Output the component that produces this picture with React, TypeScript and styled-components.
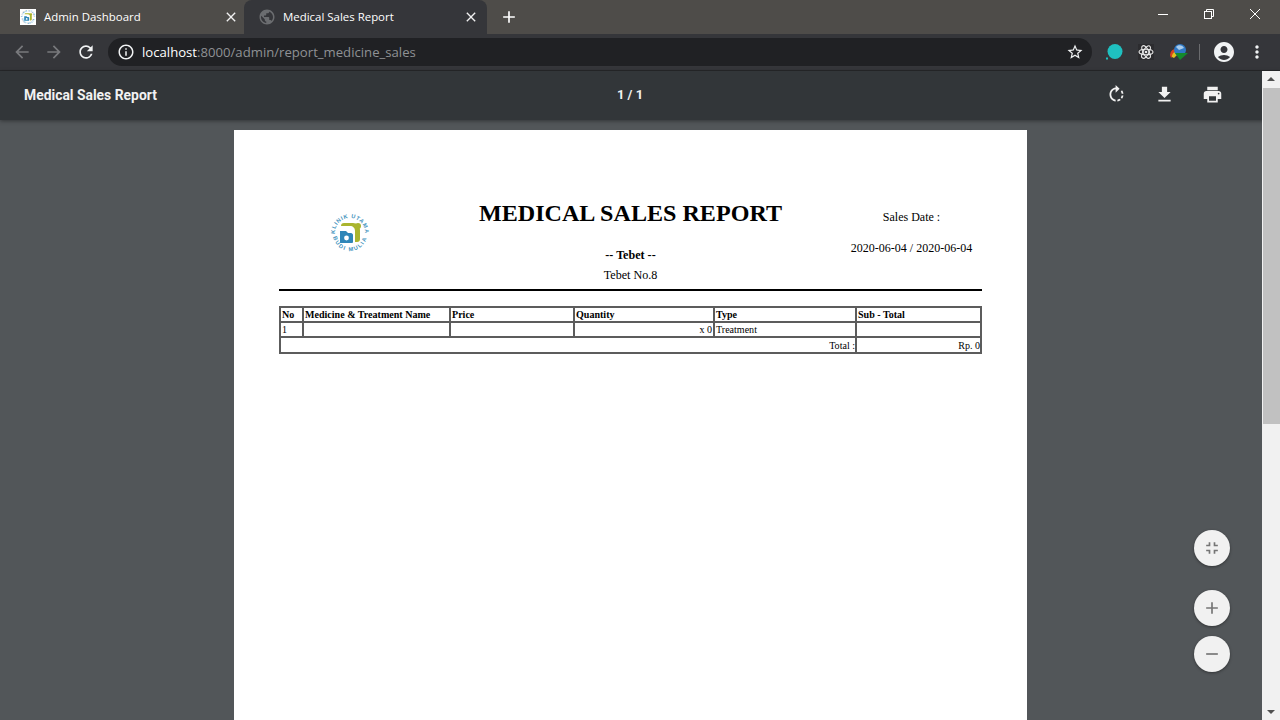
import React from 'react';
import styled, { createGlobalStyle } from 'styled-components';
import {
  MdAccountCircle,
  MdAdd,
  MdArrowBack,
  MdArrowForward,
  MdClose,
  MdFileDownload,
  MdFullscreenExit,
  MdInfoOutline,
  MdMoreVert,
  MdPrint,
  MdPublic,
  MdRefresh,
  MdRemove,
  MdRotateRight,
  MdStarBorder,
} from 'react-icons/md';

const GlobalStyle = createGlobalStyle`
  html, body {
    margin: 0;
    height: 100%;
    overflow: hidden;
    background: #525659;
  }
`;

const Browser = styled.div`
  width: 1280px;
  height: 720px;
  display: flex;
  flex-direction: column;
  overflow: hidden;
  font-family: "Open Sans", "Liberation Sans", sans-serif;
`;

const TabStrip = styled.div`
  height: 34px;
  flex: none;
  display: flex;
  align-items: stretch;
  background: #4e4c49;
  padding-left: 8px;
`;

const Tab = styled.div<{ $active?: boolean }>`
  position: relative;
  width: ${p => (p.$active ? 243 : 236)}px;
  box-sizing: border-box;
  display: flex;
  align-items: center;
  padding: 0 ${p => (p.$active ? 8 : 5)}px 0 ${p => (p.$active ? 15 : 12)}px;
  background: ${p => (p.$active ? '#35363a' : 'transparent')};
  border-radius: ${p => (p.$active ? '8px 8px 0 0' : '0')};
  color: #fff;
`;

const Favicon = styled.span`
  width: 16px;
  height: 16px;
  flex: none;
  display: flex;
  background: #fff;
`;

const GlobeIcon = styled(MdPublic)`
  width: 18px;
  height: 18px;
  margin: 0 -1px;
  flex: none;
  color: #6b6d70;
`;

const TabTitle = styled.span`
  flex: 1;
  margin-left: 8px;
  font-size: 11.45px;
  line-height: 16px;
  white-space: nowrap;
`;

const TabClose = styled(MdClose)`
  width: 16px;
  height: 16px;
  flex: none;
  color: #f1f1f1;
`;

const NewTab = styled(MdAdd)`
  width: 20px;
  height: 20px;
  align-self: center;
  margin-left: 12px;
  color: #fff;
`;

const WindowButtons = styled.div`
  margin-left: auto;
  margin-right: 2px;
  display: flex;
`;

const WindowButton = styled.span`
  width: 46px;
  height: 28px;
  display: flex;
  align-items: center;
  justify-content: center;
  color: #fff;
`;

const Toolbar = styled.div`
  height: 36px;
  flex: none;
  display: flex;
  align-items: center;
  background: #35363a;
  border-bottom: 1px solid #27282b;
  padding-left: 6px;
`;

const NavButton = styled.span<{ $dim?: boolean }>`
  width: 32px;
  height: 32px;
  display: flex;
  align-items: center;
  justify-content: center;
  font-size: 20px;
  color: ${p => (p.$dim ? '#78797c' : '#f1f3f4')};
`;

const AddressBar = styled.div`
  width: 984px;
  height: 28px;
  margin-left: 6px;
  box-sizing: border-box;
  display: flex;
  align-items: center;
  padding: 0 8px 0 9px;
  border-radius: 14px;
  background: #202124;
  color: #f1f3f4;
  font-size: 18px;
`;

const Url = styled.span`
  flex: 1;
  margin-left: 7px;
  font-size: 13.15px;
  color: #8f9194;
  white-space: nowrap;
`;

const UrlHost = styled.span`
  color: #fff;
`;

const Extensions = styled.div`
  display: flex;
  align-items: center;
  margin-left: 6px;
`;

const ExtensionSlot = styled.span<{ $shift?: number }>`
  width: 32px;
  height: 32px;
  margin-left: ${p => p.$shift ?? 0}px;
  display: flex;
  align-items: center;
  justify-content: center;
`;

const Separator = styled.span`
  width: 1px;
  height: 16px;
  margin: 0 6px 0 4px;
  background: #6a6b6e;
`;

const ProfileButton = styled(NavButton)`
  font-size: 24px;
  width: 34px;
  margin-left: 1px;
`;

const MenuButton = styled(NavButton)`
  margin-left: 0;
`;

const ViewerBar = styled.div`
  height: 49px;
  flex: none;
  box-sizing: border-box;
  display: grid;
  grid-template-columns: 1fr auto 1fr;
  align-items: center;
  padding: 0 24px 2px;
  background: #323639;
  color: #f1f1f1;
  font-family: Roboto, "Liberation Sans", sans-serif;
  font-size: 13.9px;
  font-weight: 700;
  box-shadow: 0 1px 4px rgba(0, 0, 0, 0.4);
  position: relative;
  z-index: 2;
`;

const PageCount = styled.span`
  margin-left: -20px;
  font-size: 13px;
`;

const ViewerActions = styled.div`
  justify-self: end;
  display: flex;
  gap: 27px;
  margin-right: 33px;
  font-size: 21px;
  line-height: 0;
`;

const Main = styled.div`
  flex: 1;
  min-height: 0;
  position: relative;
  display: flex;
  background: #525659;
`;

const PageArea = styled.div`
  flex: 1;
  min-width: 0;
  padding: 10px 0 0 234px;
  overflow: hidden;
`;

const Sheet = styled.div`
  width: 793px;
  height: 900px;
  box-sizing: border-box;
  padding: 70px 45px 0;
  background: #fff;
  color: #000;
  font-family: "Liberation Serif", "Times New Roman", serif;
`;

const ReportHeader = styled.div`
  display: grid;
  grid-template-columns: 141px 1fr 141px;
  height: 89px;
  border-bottom: 2px solid #000;
`;

const LogoCell = styled.div`
  display: flex;
  justify-content: center;
  padding-top: 12px;
`;

const TitleCell = styled.div`
  text-align: center;
`;

const ReportTitle = styled.h1`
  margin: 0;
  font-size: 24.1px;
  line-height: 26px;
  font-weight: 700;
`;

const Branch = styled.div`
  margin-top: 21px;
  font-size: 12.1px;
  line-height: 16px;
  font-weight: 700;
`;

const BranchAddress = styled.div`
  margin-top: 4px;
  font-size: 12.1px;
  line-height: 16px;
`;

const DateCell = styled.div`
  text-align: center;
  font-size: 12px;
  line-height: 16px;
  padding-top: 9px;
`;

const DateRange = styled.div`
  margin-top: 15px;
`;

const SalesTable = styled.table`
  width: 702px;
  margin: 15px 0 0 0;
  table-layout: fixed;
  border-collapse: collapse;
  font-size: 10.05px;
  line-height: 11px;
`;

const Th = styled.th`
  height: 15px;
  padding: 0 1px 0;
  box-sizing: border-box;
  border: 2px solid #5c5c5c;
  text-align: left;
  font-weight: 700;
  vertical-align: middle;
`;

const Td = styled.td<{ $right?: boolean; $tall?: boolean }>`
  height: ${p => (p.$tall ? 16 : 15)}px;
  padding: 0 ${p => (p.$tall ? 0 : 1)}px 0 1px;
  box-sizing: border-box;
  border: 2px solid #5c5c5c;
  text-align: ${p => (p.$right ? 'right' : 'left')};
  vertical-align: middle;
`;

const Scrollbar = styled.div`
  width: 18px;
  flex: none;
  margin-top: -49px;
  position: relative;
  z-index: 3;
  display: flex;
  flex-direction: column;
  align-items: center;
  background: #f1f1f1;
`;

const ScrollArrow = styled.span<{ $down?: boolean }>`
  width: 0;
  height: 0;
  margin: ${p => (p.$down ? 'auto 0 6px' : '6px 0 0')};
  border-left: 4px solid transparent;
  border-right: 4px solid transparent;
  border-${p => (p.$down ? 'top' : 'bottom')}: 4px solid #505050;
`;

const ScrollThumb = styled.div`
  width: 17px;
  height: 336px;
  margin-top: 7px;
  background: #c1c1c1;
`;

const ZoomControls = styled.div`
  position: absolute;
  right: 50px;
  bottom: 48px;
  display: flex;
  flex-direction: column;
  gap: 10px;
`;

const ZoomButton = styled.span<{ $gap?: number }>`
  width: 36px;
  height: 36px;
  margin-bottom: ${p => p.$gap ?? 0}px;
  border-radius: 50%;
  display: flex;
  align-items: center;
  justify-content: center;
  background: #f1f1f1;
  color: #757575;
  font-size: 20px;
  box-shadow: 0 1px 3px rgba(0, 0, 0, 0.4);
`;

const ExtensionTile = styled.span`
  width: 16px;
  height: 16px;
  display: flex;
  background: #2c2c2f;
`;

const ClinicLogo = ({ size, id }: { size: number; id: string }) => (
  <svg width={size} height={size} viewBox="0 0 42 42">
    <defs>
      <path id={`${id}-top`} d="M6 21a15 15 0 0 1 30 0" />
      <path id={`${id}-bottom`} d="M4 22a17 17 0 0 0 34 0" />
    </defs>
    <text fontFamily="Liberation Sans" fontSize="5.6" fontWeight="700" letterSpacing="0.7" fill="#3f93bd" textAnchor="middle">
      <textPath href={`#${id}-top`} startOffset="50%">KLINIK UTAMA</textPath>
    </text>
    <text fontFamily="Liberation Sans" fontSize="5.6" fontWeight="700" letterSpacing="1.4" fill="#3f93bd" textAnchor="middle">
      <textPath href={`#${id}-bottom`} startOffset="50%">BUDI MULIA</textPath>
    </text>
    <path
      d="M12 14c0-2 1-3 3-3h9c4 0 7 3 7 7v9c0 2-1 3-3 3h-2v-11c0-3-2-5-5-5H12z"
      fill="#aab52e"
    />
    <circle cx="29" cy="14" r="3" fill="#aab52e" />
    <path d="M11 19h6l2 2h3c1 0 2 1 2 2v7c0 1-1 1-2 1H12c-1 0-1 0-1-1z" fill="#2e86b8" />
    <circle cx="17.5" cy="26" r="2.4" fill="#fff" />
  </svg>
);

const IdmIcon = () => (
  <svg width="20" height="18" viewBox="0 0 20 18">
    <path d="M1 12a6 6 0 0 1 7-6l-1 3a3 3 0 0 0-3 4l-2 2z" fill="#d8431f" />
    <path d="M3 14a5 5 0 0 1 3-5l2 3-3 3z" fill="#e4c21e" />
    <circle cx="11" cy="7" r="6" fill="#2f78c4" />
    <path d="M7 4c2-3 7-2 8 1l-5 2z" fill="#a8cbea" />
    <path d="M6 10h13l-8 7z" fill="#148a2c" />
  </svg>
);

const AtomIcon = () => (
  <ExtensionTile>
    <svg width="16" height="16" viewBox="0 0 16 16" fill="none" stroke="#e8e8e8" strokeWidth="1.1">
      <ellipse cx="8" cy="8" rx="7" ry="2.8" />
      <ellipse cx="8" cy="8" rx="7" ry="2.8" transform="rotate(60 8 8)" />
      <ellipse cx="8" cy="8" rx="7" ry="2.8" transform="rotate(120 8 8)" />
      <circle cx="8" cy="8" r="1.3" fill="#e8e8e8" stroke="none" />
    </svg>
  </ExtensionTile>
);

const TealIcon = () => (
  <svg width="18" height="18" viewBox="0 0 18 18">
    <circle cx="10" cy="8.5" r="7.5" fill="#1fc0c0" />
    <rect x="1" y="14.5" width="2" height="2" fill="#1fc0c0" />
  </svg>
);

const columns = [23, 147, 124, 140, 142, 125];
const headings = ['No', 'Medicine & Treatment Name', 'Price', 'Quantity', 'Type', 'Sub - Total'];

export default function App() {
  return (
    <Browser>
      <GlobalStyle />
      <TabStrip>
        <Tab>
          <Favicon>
            <ClinicLogo size={16} id="favicon" />
          </Favicon>
          <TabTitle>Admin Dashboard</TabTitle>
          <TabClose />
        </Tab>
        <Tab $active>
          <GlobeIcon />
          <TabTitle>Medical Sales Report</TabTitle>
          <TabClose />
        </Tab>
        <NewTab />
        <WindowButtons>
          <WindowButton>
            <svg width="10" height="10" viewBox="0 0 10 10" stroke="currentColor" fill="none">
              <path d="M0 5.5h10" />
            </svg>
          </WindowButton>
          <WindowButton>
            <svg width="10" height="10" viewBox="0 0 10 10" stroke="currentColor" fill="none">
              <rect x="0.5" y="2.5" width="7" height="7" />
              <path d="M2.5 2.5v-2h7v7h-2" />
            </svg>
          </WindowButton>
          <WindowButton>
            <svg width="10" height="10" viewBox="0 0 10 10" stroke="currentColor" fill="none">
              <path d="M0 0l10 10M10 0L0 10" />
            </svg>
          </WindowButton>
        </WindowButtons>
      </TabStrip>
      <Toolbar>
        <NavButton $dim><MdArrowBack /></NavButton>
        <NavButton $dim><MdArrowForward /></NavButton>
        <NavButton><MdRefresh /></NavButton>
        <AddressBar>
          <MdInfoOutline />
          <Url>
            <UrlHost>localhost</UrlHost>:8000/admin/report_medicine_sales
          </Url>
          <MdStarBorder />
        </AddressBar>
        <Extensions>
          <ExtensionSlot><TealIcon /></ExtensionSlot>
          <ExtensionSlot><AtomIcon /></ExtensionSlot>
          <ExtensionSlot $shift={1}><IdmIcon /></ExtensionSlot>
          <Separator />
          <ProfileButton><MdAccountCircle /></ProfileButton>
          <MenuButton><MdMoreVert /></MenuButton>
        </Extensions>
      </Toolbar>
      <ViewerBar>
        <span>Medical Sales Report</span>
        <PageCount>1 / 1</PageCount>
        <ViewerActions>
          <MdRotateRight />
          <MdFileDownload />
          <MdPrint />
        </ViewerActions>
      </ViewerBar>
      <Main>
        <PageArea>
          <Sheet>
            <ReportHeader>
              <LogoCell>
                <ClinicLogo size={42} id="report" />
              </LogoCell>
              <TitleCell>
                <ReportTitle>MEDICAL SALES REPORT</ReportTitle>
                <Branch>-- Tebet --</Branch>
                <BranchAddress>Tebet No.8</BranchAddress>
              </TitleCell>
              <DateCell>
                <div>Sales Date :</div>
                <DateRange>2020-06-04 / 2020-06-04</DateRange>
              </DateCell>
            </ReportHeader>
            <SalesTable>
              <colgroup>
                {columns.map((width, i) => (
                  <col key={i} width={width} />
                ))}
              </colgroup>
              <thead>
                <tr>
                  {headings.map(heading => (
                    <Th key={heading}>{heading}</Th>
                  ))}
                </tr>
              </thead>
              <tbody>
                <tr>
                  <Td>1</Td>
                  <Td />
                  <Td />
                  <Td $right>x 0</Td>
                  <Td>Treatment</Td>
                  <Td />
                </tr>
                <tr>
                  <Td colSpan={5} $right $tall>Total :</Td>
                  <Td $right $tall>Rp. 0</Td>
                </tr>
              </tbody>
            </SalesTable>
          </Sheet>
        </PageArea>
        <Scrollbar>
          <ScrollArrow />
          <ScrollThumb />
          <ScrollArrow $down />
        </Scrollbar>
        <ZoomControls>
          <ZoomButton $gap={14}><MdFullscreenExit /></ZoomButton>
          <ZoomButton><MdAdd /></ZoomButton>
          <ZoomButton><MdRemove /></ZoomButton>
        </ZoomControls>
      </Main>
    </Browser>
  );
}
